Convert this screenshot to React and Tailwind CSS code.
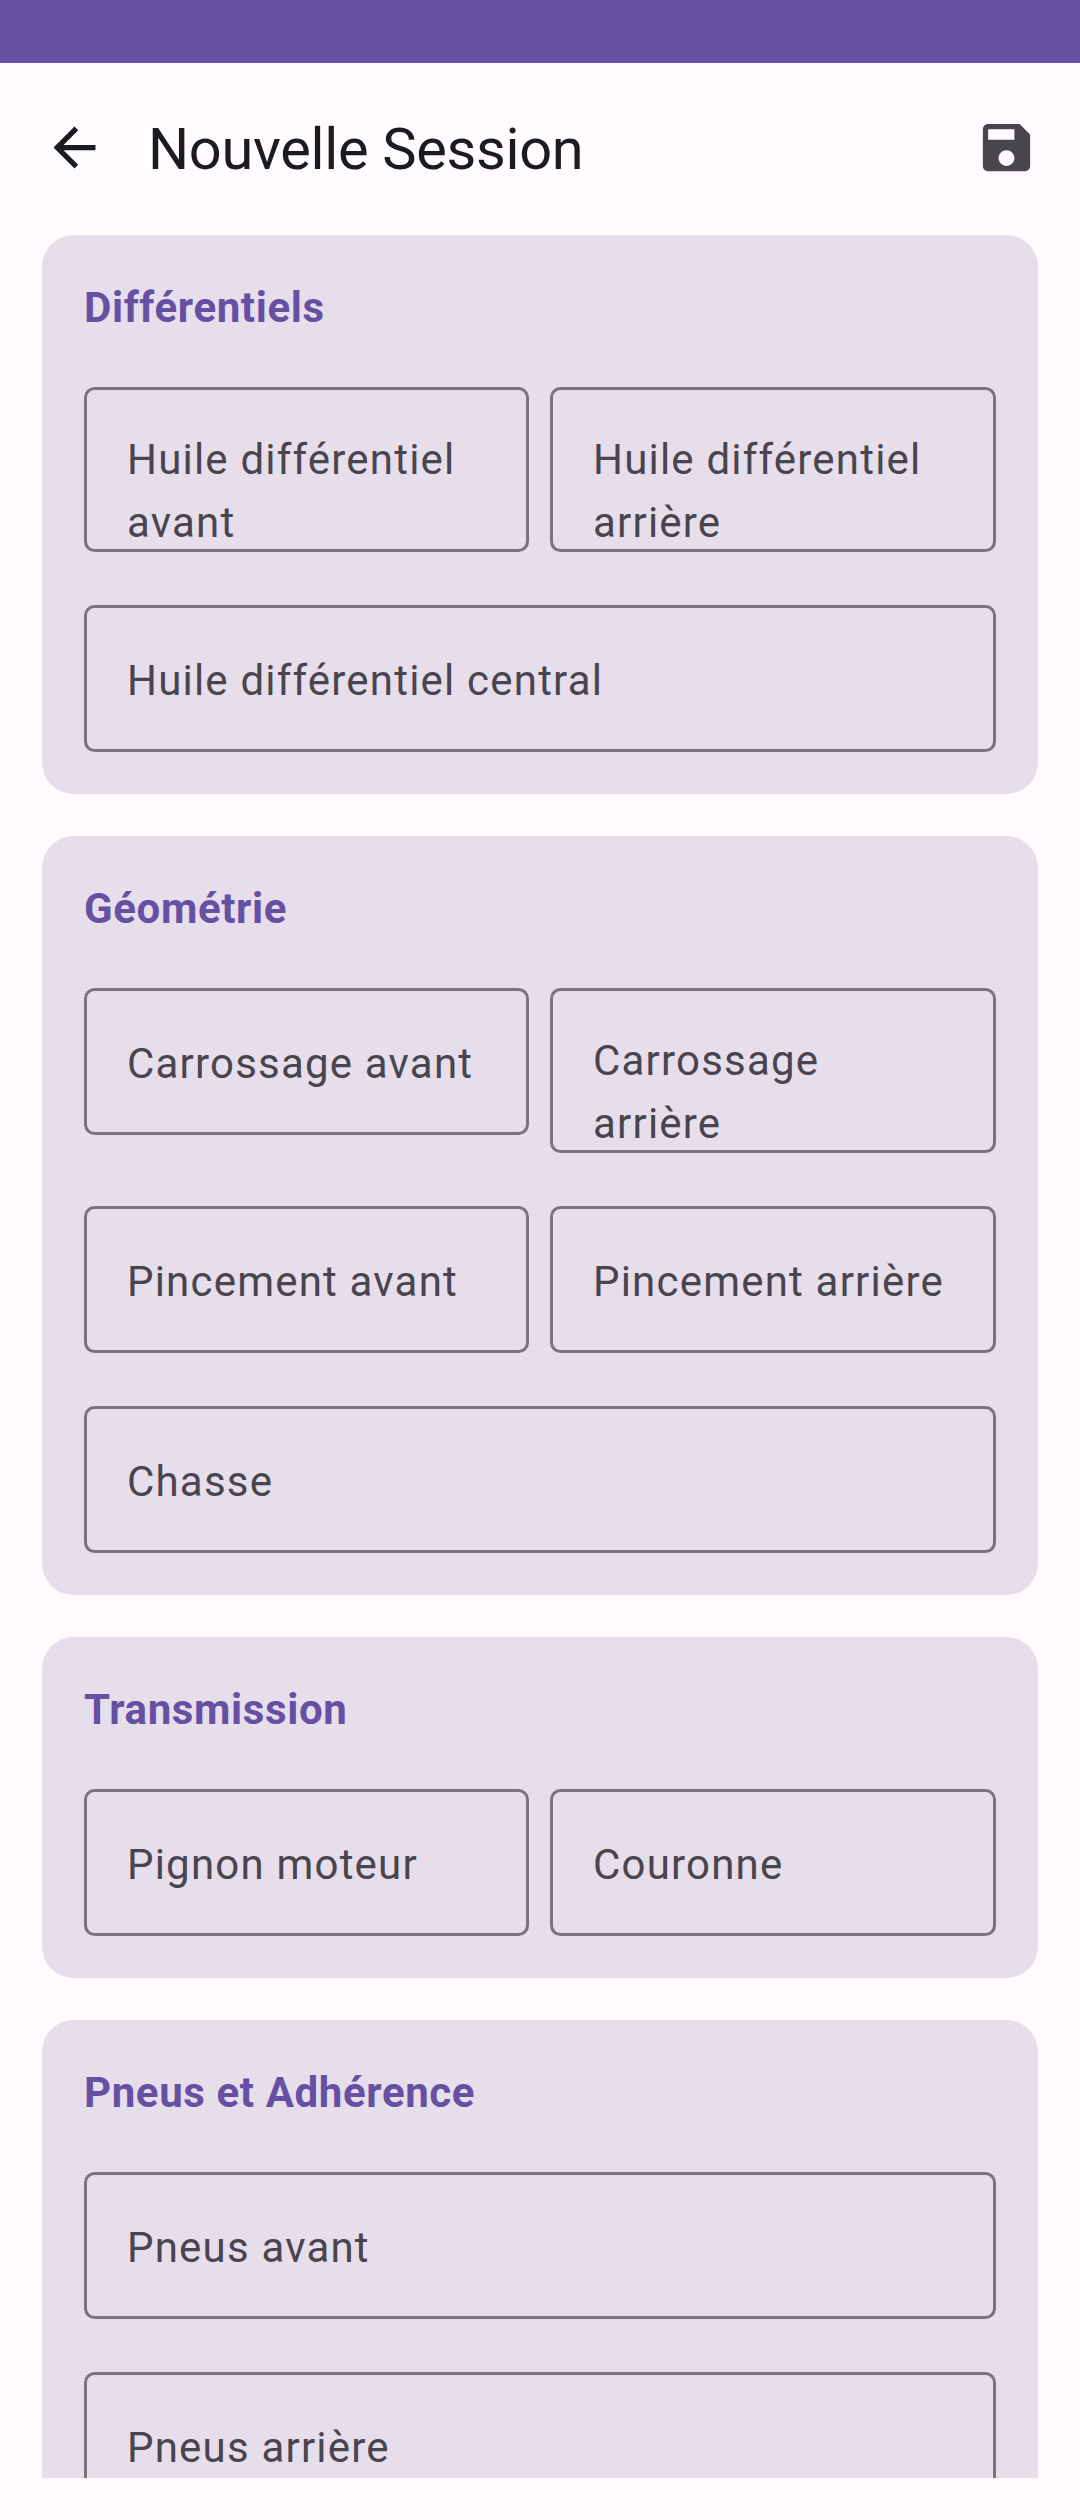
const sections = [
  {
    title: "Différentiels",
    rows: [["Huile différentiel\navant", "Huile différentiel\narrière"], ["Huile différentiel central"]],
  },
  {
    title: "Géométrie",
    rows: [["Carrossage avant", "Carrossage\narrière"], ["Pincement avant", "Pincement arrière"], ["Chasse"]],
  },
  { title: "Transmission", rows: [["Pignon moteur", "Couronne"]] },
  { title: "Pneus et Adhérence", rows: [["Pneus avant"], ["Pneus arrière"]] },
];

function BackIcon() {
  return (
    <svg viewBox="0 0 24 24" className="size-[63px] shrink-0" fill="currentColor">
      <path d="M20 11H7.83l5.59-5.59L12 4l-8 8 8 8 1.41-1.41L7.83 13H20v-2z" />
    </svg>
  );
}

function SaveIcon() {
  return (
    <svg viewBox="0 0 24 24" className="size-[63px] shrink-0" fill="currentColor">
      <path d="M17 3H5c-1.11 0-2 .9-2 2v14c0 1.1.89 2 2 2h14c1.1 0 2-.9 2-2V7l-4-4zm-5 16c-1.66 0-3-1.34-3-3s1.34-3 3-3 3 1.34 3 3-1.34 3-3 3zm3-10H5V5h10v4z" />
    </svg>
  );
}

function Field({ label }) {
  const size = label.includes("\n") ? "h-[165px] pt-[38px]" : "h-[147px] pt-[41px]";
  return (
    <div className={`${size} rounded-[10.5px] border-3 border-[#79747e] pl-[40px]`}>
      <span className="block whitespace-pre text-[42px] leading-[63px] tracking-[1.2px] text-[#49454f]">
        {label}
      </span>
    </div>
  );
}

function Section({ title, rows }) {
  return (
    <section className="shrink-0 rounded-[31.5px] bg-[#e6dfeb] px-[42px] pt-[41px] pb-[42px]">
      <h2 className="mb-[48px] text-[42px] font-bold leading-[63px] tracking-[0.62px] text-[#6650a4]">{title}</h2>
      <div className="flex flex-col gap-[53px]">
        {rows.map((row) => (
          <div
            key={row[0]}
            className={row.length === 2 ? "grid grid-cols-[445px_446px] items-start gap-[21px]" : "grid grid-cols-1"}
          >
            {row.map((label) => (
              <Field key={label} label={label} />
            ))}
          </div>
        ))}
      </div>
    </section>
  );
}

export default function App() {
  return (
    <div className="flex h-[2520px] w-[1080px] flex-col overflow-hidden bg-[#fffbfe] pb-[42px] font-['Roboto',sans-serif]">
      <div className="h-[63px] shrink-0 bg-[#6650a4]" />
      <header className="flex h-[172px] shrink-0 items-center pr-[42px] pb-[3px] pl-[43px] text-[#1c1b1f]">
        <BackIcon />
        <h1 className="ml-[42px] flex-1 pt-[4px] text-[57.75px] leading-[73.5px] tracking-[-0.33px]">
          Nouvelle Session
        </h1>
        <span className="text-[#49454f]">
          <SaveIcon />
        </span>
      </header>
      <main className="flex min-h-0 flex-1 flex-col gap-[42px] overflow-hidden px-[42px]">
        {sections.map((s) => (
          <Section key={s.title} {...s} />
        ))}
      </main>
    </div>
  );
}
